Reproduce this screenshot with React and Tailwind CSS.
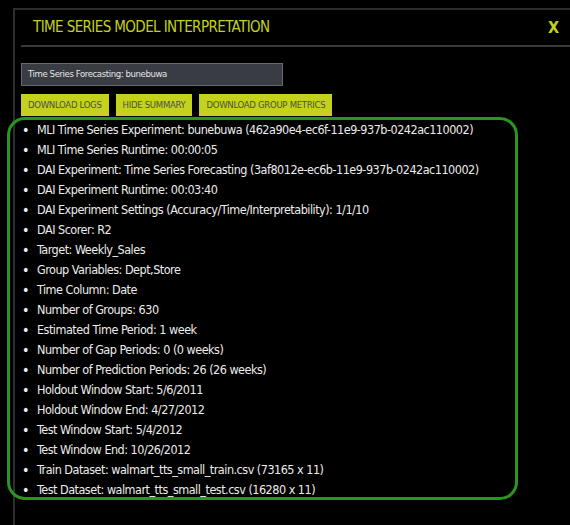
import React from "react";

const items = [
  "MLI Time Series Experiment: bunebuwa (462a90e4-ec6f-11e9-937b-0242ac110002)",
  "MLI Time Series Runtime: 00:00:05",
  "DAI Experiment: Time Series Forecasting (3af8012e-ec6b-11e9-937b-0242ac110002)",
  "DAI Experiment Runtime: 00:03:40",
  "DAI Experiment Settings (Accuracy/Time/Interpretability): 1/1/10",
  "DAI Scorer: R2",
  "Target: Weekly_Sales",
  "Group Variables: Dept,Store",
  "Time Column: Date",
  "Number of Groups: 630",
  "Estimated Time Period: 1 week",
  "Number of Gap Periods: 0 (0 weeks)",
  "Number of Prediction Periods: 26 (26 weeks)",
  "Holdout Window Start: 5/6/2011",
  "Holdout Window End: 4/27/2012",
  "Test Window Start: 5/4/2012",
  "Test Window End: 10/26/2012",
  "Train Dataset: walmart_tts_small_train.csv (73165 x 11)",
  "Test Dataset: walmart_tts_small_test.csv (16280 x 11)",
];

const buttons = ["DOWNLOAD LOGS", "HIDE SUMMARY", "DOWNLOAD GROUP METRICS"];

export default function App() {
  return (
    <div className="relative w-[570px] h-[525px] overflow-hidden bg-black font-['DejaVu_Sans_Condensed','DejaVu_Sans',sans-serif]">
      <div className="ml-[13px] mt-[8px] h-[540px] border-l-2 border-t-2 border-[#2e2e2e] pl-[6px]">
        {/* header */}
        <div className="flex h-[37px] items-center justify-between border-b-2 border-[#3a3a3a] pl-3 pr-[11px]">
          <h1 className="whitespace-nowrap text-[15px] tracking-[-0.6px] text-[#c4d21c]">
            TIME SERIES MODEL INTERPRETATION
          </h1>
          <button className="text-[16px] font-bold text-[#c4d21c]">X</button>
        </div>

        <div className="mt-4 flex h-[23px] w-[262px] items-center whitespace-nowrap border border-[#666a70] bg-[#393c42] px-[6px] text-[9.5px] tracking-[-0.4px] text-[#e6e6e6]">
          Time Series Forecasting: bunebuwa
        </div>

        <div className="mt-[8px] flex gap-[7px]">
          {buttons.map((b) => (
            <button
              key={b}
              className="h-[22px] whitespace-nowrap bg-[#c4d21c] px-[7px] text-[9.5px] tracking-[-0.3px] text-[#4f4f45]"
            >
              {b}
            </button>
          ))}
        </div>

        <ul className="mt-[4px] pl-[1px]">
          {items.map((t) => (
            <li
              key={t}
              className="flex h-5 items-center whitespace-nowrap text-[12.5px] tracking-[-0.5px] text-[#ececec]"
            >
              <span className="w-[15px] text-[14px] leading-none">•</span>
              <span>{t}</span>
            </li>
          ))}
        </ul>
      </div>

      {/* highlight annotation */}
      <div className="pointer-events-none absolute left-[7px] top-[117px] h-[383px] w-[511px] rounded-[18px] border-[3px] border-[#28961f]" />
    </div>
  );
}
